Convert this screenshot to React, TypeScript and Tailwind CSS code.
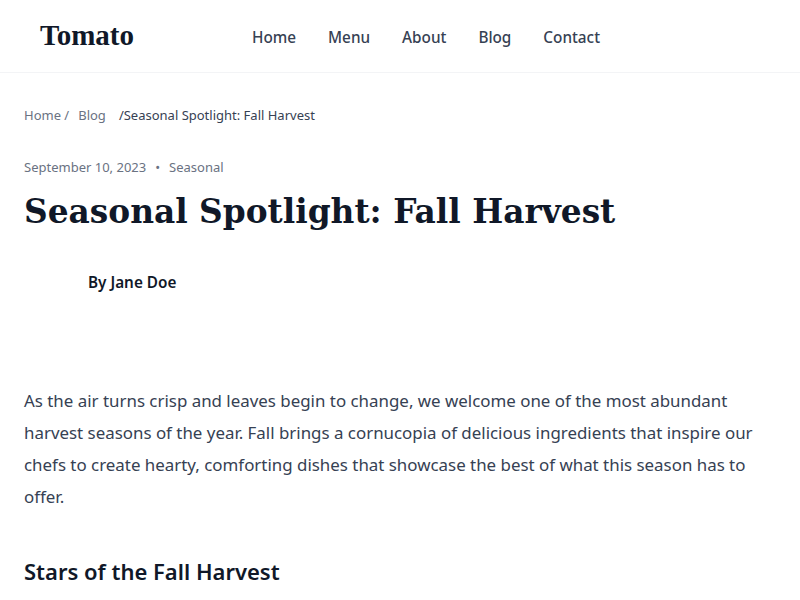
import React from "react";

export default function App() {
  return (
    <div className="min-h-screen bg-white" style={{ fontFamily: '"Noto Sans", sans-serif' }}>
      <header className="h-[73px] border-b border-gray-100 flex items-center px-10">
        <div className="w-[212px] text-[29px] font-bold text-gray-900 leading-none pb-[1px]" style={{ fontFamily: '"Liberation Serif", serif' }}>
          Tomato
        </div>
        <nav className="flex items-center gap-[32px] text-[15.3px] font-medium text-gray-700 pt-[2px]">
          <a>Home</a>
          <a>Menu</a>
          <a>About</a>
          <a>Blog</a>
          <a>Contact</a>
        </nav>
      </header>
      <main className="px-6">
        <div className="pt-[32px] text-[13px] leading-5 text-gray-500 flex">
          <span>Home /</span>
          <span className="ml-[9px]">Blog</span>
          <span className="ml-[13px] text-gray-700">/Seasonal Spotlight: Fall Harvest</span>
        </div>
        <div className="mt-[32px] text-[13px] leading-5 text-gray-500 flex items-center gap-[9px]">
          <span>September 10, 2023</span>
          <span>•</span>
          <span>Seasonal</span>
        </div>
        <h1 className="mt-[14px] text-[32.8px] font-bold text-gray-900 leading-[41px]" style={{ fontFamily: '"DejaVu Serif", serif' }}>
          Seasonal Spotlight: Fall Harvest
        </h1>
        <div className="mt-[26px] flex items-center gap-4 h-12">
          <div className="w-12 h-12" />
          <span className="text-[15.3px] font-semibold text-gray-900">By Jane Doe</span>
        </div>
        <p className="mt-[79px] text-[16.9px] leading-8 text-gray-700">
          As the air turns crisp and leaves begin to change, we welcome one of the most abundant harvest seasons of the year. Fall brings a cornucopia of delicious ingredients that inspire our chefs to create hearty, comforting dishes that showcase the best of what this season has to offer.
        </p>
        <h2 className="mt-[43px] text-[22px] leading-[30px] font-semibold text-gray-900">Stars of the Fall Harvest</h2>
      </main>
    </div>
  );
}
